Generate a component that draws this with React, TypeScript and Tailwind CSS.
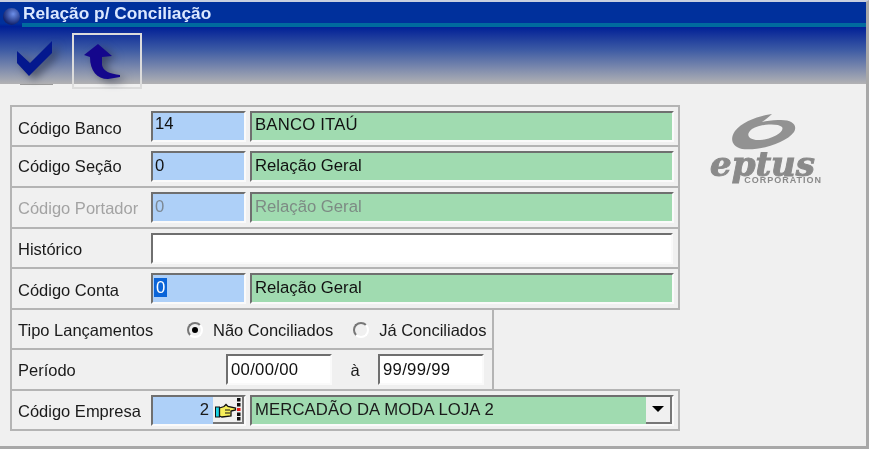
const font = "font-['Liberation_Sans',Arial,sans-serif]";

const sunken = "border-2 border-t-[#6f6f6f] border-l-[#6f6f6f] border-r-[#fafafa] border-b-[#fafafa]";

const Field = ({ value, className = "", dim = false }: { value: string; className?: string; dim?: boolean }) => (
  <div className={`${sunken} flex h-[31px] items-center pr-[2px] pl-[3px] text-[16.7px] ${dim ? "text-[#7d8b84]" : "text-[#111]"} ${className}`}>
    {value}
  </div>
);

type RowProps = {
  label: string;
  code: string;
  name: string;
  labelPad: string;
  dim?: boolean;
  selected?: boolean;
  first?: boolean;
};

const Row = ({ label, code, name, labelPad, dim = false, selected = false, first = false }: RowProps) => (
  <div className={`flex items-center border-b-2 border-[#b4b4b4] pl-[6px] ${first ? "h-[40px]" : "h-[41px]"}`}>
    <span className={`w-[133px] text-[16.5px] ${labelPad} ${dim ? "text-[#a3a3a3]" : "text-[#1a1a1a]"}`}>{label}</span>
    <div className={`${sunken} flex h-[31px] w-[95px] items-center bg-[#aed0f8] px-[1px] text-[16.7px] ${first ? "pb-[5px]" : "pb-[2px]"} ${dim ? "text-[#7c8894]" : "text-[#111]"}`}>
      {selected ? <span className="bg-[#0a64d8] px-[2px] leading-[19px] text-white">{code}</span> : <span className="pl-[1px]">{code}</span>}
    </div>
    <Field value={name} dim={dim} className={`ml-[4px] w-[424px] bg-[#a0dbb0] ${first ? "pb-[3px] tracking-[0.2px]" : "pb-[2px]"}`} />
  </div>
);

const Radio = ({ checked, label }: { checked?: boolean; label: string }) => (
  <span className="flex items-center gap-[10px]">
    <span className="flex h-[16px] w-[16px] items-center justify-center rounded-full border-2 border-t-[#777] border-l-[#777] border-r-[#fff] border-b-[#fff] bg-[#f0f0f0]">
      {checked && <span className="h-[6px] w-[6px] rounded-full bg-black" />}
    </span>
    {label}
  </span>
);

const CheckIcon = () => (
  <svg width="35" height="36" viewBox="0 0 35 36" className="overflow-visible drop-shadow-[5px_4px_4px_rgba(45,50,70,0.65)]">
    <path d="M0 10 L13 22 L35 0 L35 12 L12 35 L0 22 Z" fill="#04188e" />
  </svg>
);

const BackIcon = () => (
  <svg width="37" height="36" viewBox="0 0 37 36" className="overflow-visible drop-shadow-[5px_3px_4px_rgba(45,50,70,0.65)]">
    <path d="M14 0 L28 12 L18 13 L18 21 C19 27 26 30 36 31 L36 33 L24 35 C13 35 6 27 6 13 L0 11 Z" fill="#14068c" />
  </svg>
);

const HandIcon = () => (
  <svg width="28" height="24" viewBox="0 0 28 24">
    <rect x="1.5" y="10" width="4" height="10" fill="#19d3e6" stroke="#111" />
    <path d="M5.5 11 L10 9.5 L12 7.5 L14 9.5 L21.5 11 L21.5 13 L17 14 L17 19 L8 20 L5.5 19 Z" fill="#f6ee5a" stroke="#111" strokeWidth="1.3" />
    <path d="M11 13 H16 M11 16 H16" stroke="#111" strokeWidth="1" />
    <rect x="23" y="1" width="3.5" height="3.5" fill="#111" />
    <rect x="23" y="6" width="3.5" height="3.5" fill="#111" />
    <rect x="23" y="11" width="3.5" height="3" fill="#e01818" />
    <rect x="23" y="15.5" width="3.5" height="3.5" fill="#111" />
    <rect x="23" y="20" width="3.5" height="3.5" fill="#111" />
  </svg>
);

const EptusLogo = () => (
  <div className="flex w-[112px] flex-col">
    <svg width="70" height="38" viewBox="0 0 70 38" className="ml-[18px]">
      <path
        fillRule="evenodd"
        d="M44 1 C30 3 14 9 7 18 C2 25 3 33 14 36 C32 38 58 30 66 19 C70 12 64 6 50 7 C44 7 38 8 34 9 C38 6 41 4 44 1 Z M24 16 C32 11 50 10 54 14 C57 18 46 26 32 27 C22 28 16 22 24 16 Z"
        fill="#929292"
      />
    </svg>
    <span className="mt-[1px] font-['DejaVu_Serif',serif] text-[34px] leading-[25px] font-bold text-[#8a8a8a] italic [-webkit-text-stroke:1px_#8a8a8a]">eptus</span>
    <span className="-mt-[1px] self-end text-[9px] leading-[8px] font-bold tracking-[1px] text-[#8a8a8a]">CORPORATION</span>
  </div>
);

const App = () => {
  return (
    <div className={`${font} h-[452px] w-[870px] overflow-hidden bg-white text-[#1a1a1a] blur-[0.5px]`}>
      <div className="h-[449px] w-[869px] border-t-2 border-r-[3px] border-b-[3px] border-t-[#c8cfe0] border-r-[#a8a8a8] border-b-[#a8a8a8] bg-[#f0f0f0]">
        <header className="h-[82px] bg-[linear-gradient(to_bottom,#00309c_0%,#00309c_26%,#001f96_30%,#3c5aa4_58%,#b2b2b4_100%)]">
          <div className="flex h-[25px] items-start">
            <span className="mt-[6px] ml-[3px] h-[17px] w-[17px] rounded-full bg-[radial-gradient(circle_at_60%_35%,#6d8fe8,#14246e_70%)]" />
            <div className="ml-[2px] flex h-[25px] flex-1 items-center border-b-[4px] border-[#006a9e] pt-[3px] pl-[1px] text-[17.3px] font-bold text-[#dbe8ff]">
              Relação p/ Conciliação
            </div>
          </div>
          <div className="flex items-start pt-[6px]">
            <div className="ml-[17px] w-[55px]">
              <div className="pt-[8px]"><CheckIcon /></div>
              <div className="mt-[7px] ml-[3px] h-[1px] w-[33px] bg-[#9a9a9a]" />
            </div>
            <div className="h-[56px] w-[70px] border-2 border-[#dcdcdc] pt-[9px] pl-[10px]">
              <BackIcon />
            </div>
          </div>
        </header>

        <div className="flex pt-[21px] pl-[10px]">
          <div className="w-[670px]">
            <div className="border-2 border-b-0 border-[#b4b4b4]">
              <Row first label="Código Banco" code="14" name="BANCO ITAÚ" labelPad="pt-[4px]" />
              <Row label="Código Seção" code="0" name="Relação Geral" labelPad="pt-0" />
              <Row label="Código Portador" code="0" name="Relação Geral" labelPad="pt-[2px]" dim />
              <div className="flex h-[40px] items-center border-b-2 border-[#b4b4b4] pl-[6px]">
                <span className="w-[133px] pt-[3px] text-[16.5px]">Histórico</span>
                <Field value="" className="w-[522px] bg-white" />
              </div>
              <Row label="Código Conta" code="0" name="Relação Geral" labelPad="pt-[4px]" selected />
            </div>
            <div className="w-[484px] border-x-2 border-[#b4b4b4] text-[16.5px]">
              <div className="flex h-[40px] items-center border-b-2 border-[#b4b4b4] pt-[2px] pl-[6px]">
                <span className="w-[169px]">Tipo Lançamentos</span>
                <Radio checked label="Não Conciliados" />
                <span className="ml-[20px]"><Radio label="Já Conciliados" /></span>
              </div>
              <div className="flex h-[39px] items-center pl-[6px]">
                <span className="w-[208px] pt-[2px]">Período</span>
                <Field value="00/00/00" className="w-[106px] bg-white tracking-[0.3px]" />
                <span className="w-[46px] pt-[2px] text-center">à</span>
                <Field value="99/99/99" className="w-[106px] bg-white tracking-[0.3px]" />
              </div>
            </div>
            <div className="flex h-[42px] items-center border-2 border-[#b4b4b4] pl-[6px]">
              <span className="w-[133px] pt-[2px] text-[16.5px]">Código Empresa</span>
              <div className={`${sunken} flex h-[31px] w-[95px] items-center bg-[#aed0f8] text-[16.7px]`}>
                <span className="flex-1 pr-[4px] text-right">2</span>
                <span className="flex h-[27px] w-[31px] items-center justify-center border-r-2 border-b-2 border-[#777] bg-[#f0f0f0]">
                  <HandIcon />
                </span>
              </div>
              <div className={`${sunken} ml-[4px] flex h-[31px] w-[424px] items-center justify-between bg-[#a0dbb0] pl-[3px] text-[16.7px] tracking-[0.1px]`}>
                MERCADÃO DA MODA LOJA 2
                <span className="flex h-[27px] w-[26px] items-center justify-center border-r-2 border-b-2 border-[#777] bg-[#f0f0f0]">
                  <span className="h-0 w-0 border-x-[6px] border-t-[6px] border-x-transparent border-t-black" />
                </span>
              </div>
            </div>
          </div>
          <div className="ml-[30px] pt-[8px]">
            <EptusLogo />
          </div>
        </div>
      </div>
    </div>
  );
};

export default App;
